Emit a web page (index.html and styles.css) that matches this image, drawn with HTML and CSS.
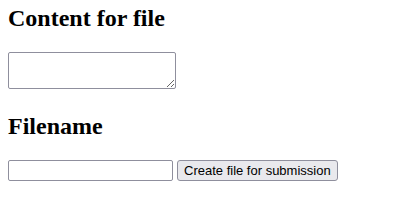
FILE: index.html
```html
<!DOCTYPE html>
<html lang="en">
<head>
  <meta charset="UTF-8" />
  <title>Create file</title>
  <link rel="stylesheet" href="styles.css">
</head>
<body>
  <h2 class="title first">Content for file</h2>
  <div class="field">
    <textarea class="content"></textarea>
  </div>
  <h2 class="title">Filename</h2>
  <div class="field">
    <input type="text" class="filename" />
    <button class="submit">Create file for submission</button>
  </div>
</body>
</html>
```

FILE: styles.css
```css
body {
  margin: 5px 8px 8px;
  font-family: 'Liberation Serif', serif;
  color: #000;
  background: #fff;
}

.title {
  font-size: 24px;
  font-weight: bold;
  margin: 20px 0;
}

.title.first {
  margin-top: 0;
}

.content {
  width: 168px;
  height: 37px;
  box-sizing: border-box;
  border: 1px solid #8f8f9d;
  border-radius: 2px;
}

.filename {
  width: 165px;
  height: 21px;
  box-sizing: border-box;
  border: 1px solid #8f8f9d;
  border-radius: 2px;
}

.submit {
  font-family: 'Liberation Sans', sans-serif;
  font-size: 13px;
  height: 21px;
  padding: 0 6px;
  background: #e9e9ed;
  border: 1px solid #8f8f9d;
  border-radius: 3px;
}
```
